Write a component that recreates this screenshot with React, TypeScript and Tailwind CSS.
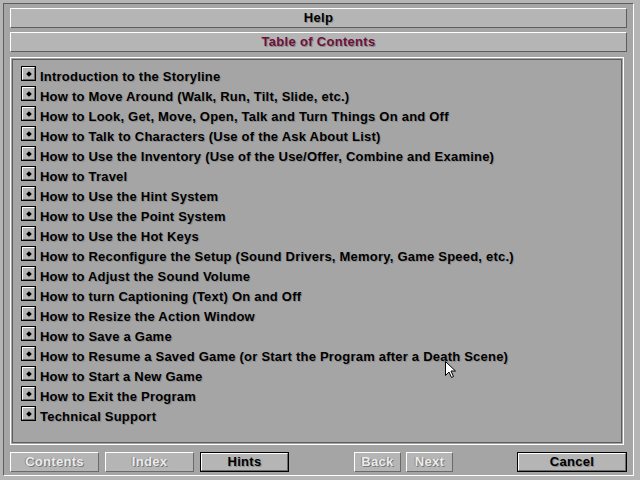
const topics = [
  'Introduction to the Storyline',
  'How to Move Around (Walk, Run, Tilt, Slide, etc.)',
  'How to Look, Get, Move, Open, Talk and Turn Things On and Off',
  'How to Talk to Characters (Use of the Ask About List)',
  'How to Use the Inventory (Use of the Use/Offer, Combine and Examine)',
  'How to Travel',
  'How to Use the Hint System',
  'How to Use the Point System',
  'How to Use the Hot Keys',
  'How to Reconfigure the Setup (Sound Drivers, Memory, Game Speed, etc.)',
  'How to Adjust the Sound Volume',
  'How to turn Captioning (Text) On and Off',
  'How to Resize the Action Window',
  'How to Save a Game',
  'How to Resume a Saved Game (or Start the Program after a Death Scene)',
  'How to Start a New Game',
  'How to Exit the Program',
  'Technical Support',
]

const font = "font-['Liberation_Sans',Arial,sans-serif] font-bold"

function Bullet() {
  return (
    <div className="h-[15px] w-[15px] shrink-0 border border-black">
      <div className="flex h-full w-full items-center justify-center border-t border-l border-white border-r border-b border-r-[#666] border-b-[#666] bg-[#b5b5b5]">
        <div className="h-[4px] w-[4px] rotate-45 bg-black" />
      </div>
    </div>
  )
}

function Button({ label, width, enabled }: { label: string; width: string; enabled?: boolean }) {
  if (enabled) {
    return (
      <div className={`${width} h-[20px] border border-black`}>
        <div className="flex h-full w-full items-center justify-center border-t border-l border-white border-r border-b border-r-[#6a6a6a] border-b-[#6a6a6a] bg-[#b5b5b5]">
          <span className={`${font} text-[13px] tracking-[0.3px] text-black [text-shadow:1px_1px_0_#8a8a8a]`}>{label}</span>
        </div>
      </div>
    )
  }
  return (
    <div className={`${width} flex h-[20px] items-center justify-center border-t border-l border-white border-r border-b border-r-[#6a6a6a] border-b-[#6a6a6a] bg-[#b5b5b5]`}>
      <span className={`${font} text-[13px] tracking-[0.3px] text-[#ececec] [text-shadow:1px_1px_0_#7a7a7a,-1px_0_0_#8a8a8a]`}>{label}</span>
    </div>
  )
}

export default function App() {
  return (
    <div className="relative h-[480px] w-[640px] bg-[#b5b5b5] pt-[3px] pr-[6px] pb-[4px] pl-[3px]">
      <div className="flex h-full w-full flex-col border-t border-l border-[#5e5e5e] border-r border-b border-r-white border-b-white bg-[#a5a5a5] pt-[4px] pr-[5px] pl-[6px]">
        <div className="flex h-[20px] w-[617px] items-center justify-center border-t border-l border-white border-r border-b border-r-[#5e5e5e] border-b-[#5e5e5e] bg-[#b5b5b5]">
          <span className={`${font} text-[13px] tracking-[0.3px] text-black [text-shadow:1px_1px_0_#8a8a8a]`}>Help</span>
        </div>
        <div className="mt-[4px] flex h-[20px] w-[617px] items-center justify-center border-t border-l border-white border-r border-b border-r-[#5e5e5e] border-b-[#5e5e5e] bg-[#b5b5b5]">
          <span className={`${font} text-[13px] tracking-[0.3px] text-[#6e0f3c] [text-shadow:1px_1px_0_#8a8a8a]`}>Table of Contents</span>
        </div>
        <div className="mt-[5px] h-[388px] w-[614px] border border-white p-px">
          <div className="flex h-full w-full flex-col gap-[5px] border border-[#5e5e5e] pt-[6px] pl-[8px]">
            {topics.map((t) => (
              <div key={t} className="flex h-[15px] items-center gap-[4px]">
                <Bullet />
                <span className={`${font} relative top-[3px] text-[13px] tracking-[0.22px] whitespace-nowrap text-black [text-shadow:1px_1px_0_#8a8a8a]`}>{t}</span>
              </div>
            ))}
          </div>
        </div>
        <div className="mt-[7px] flex items-center">
          <Button label="Contents" width="w-[89px]" />
          <div className="ml-[6px]"><Button label="Index" width="w-[89px]" /></div>
          <div className="ml-[6px]"><Button label="Hints" width="w-[89px]" enabled /></div>
          <div className="ml-[65px]"><Button label="Back" width="w-[47px]" /></div>
          <div className="ml-[5px]"><Button label="Next" width="w-[47px]" /></div>
          <div className="ml-[64px]"><Button label="Cancel" width="w-[110px]" enabled /></div>
        </div>
      </div>
      <svg className="absolute top-[360px] left-[444px]" width="13" height="20" viewBox="0 0 13 20">
        <path d="M1.5 1.5 L1.5 15.5 L5 12 L7.5 17.5 L9.5 16.5 L7 11 L11.5 11 Z" fill="white" stroke="black" strokeWidth="1" />
      </svg>
    </div>
  )
}
